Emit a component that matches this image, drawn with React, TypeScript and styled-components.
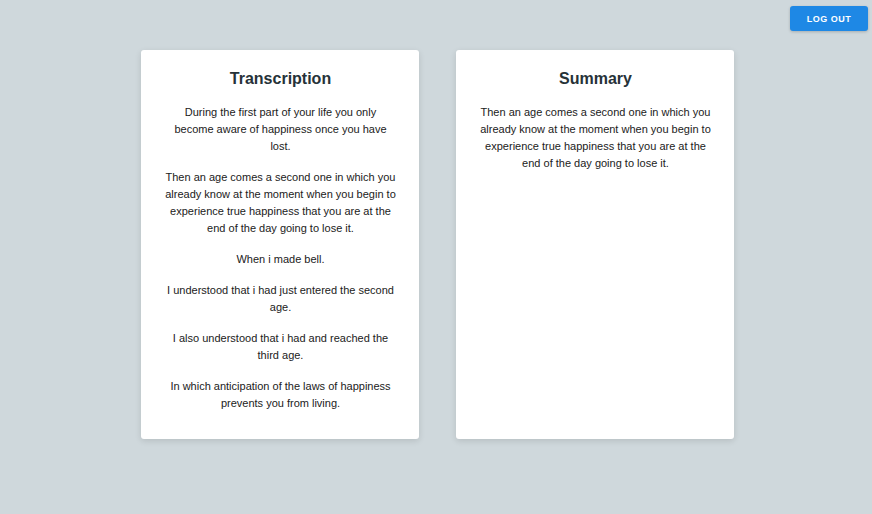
import styled, { createGlobalStyle } from 'styled-components';

const GlobalStyle = createGlobalStyle`
  html, body {
    margin: 0;
    padding: 0;
    background: #cfd8dc;
    font-family: 'Liberation Sans', Arial, sans-serif;
  }
`;

const Page = styled.div`
  min-height: 514px;
  background: #cfd8dc;
`;

const Header = styled.div`
  display: flex;
  justify-content: flex-end;
  padding: 6px 4px 0 0;
`;

const LogoutButton = styled.button`
  width: 78px;
  height: 25px;
  border: none;
  border-radius: 3px;
  background: #1e88e5;
  color: #ffffff;
  font-family: 'Liberation Sans', Arial, sans-serif;
  font-size: 9px;
  font-weight: 700;
  letter-spacing: 0.5px;
  box-shadow: 0 1px 3px rgba(0, 0, 0, 0.2);
  cursor: pointer;
`;

const Columns = styled.div`
  display: flex;
  justify-content: center;
  gap: 37px;
  margin-top: 19px;
  padding-left: 3px;
`;

const Card = styled.div`
  width: 278px;
  box-sizing: border-box;
  background: #ffffff;
  border-radius: 3px;
  padding: 19px 22px 27px 23px;
  box-shadow: 0 2px 6px rgba(0, 0, 0, 0.12);
  text-align: center;
`;

const Title = styled.h2`
  margin: 0 0 15px;
  font-size: 16px;
  line-height: 20px;
  font-weight: 700;
  color: #263238;
`;

const Paragraph = styled.p`
  margin: 0 0 14px;
  font-size: 11px;
  line-height: 17px;
  color: #212121;

  &:last-child {
    margin-bottom: 0;
  }
`;

const transcription = [
  'During the first part of your life you only become aware of happiness once you have lost.',
  'Then an age comes a second one in which you already know at the moment when you begin to experience true happiness that you are at the end of the day going to lose it.',
  'When i made bell.',
  'I understood that i had just entered the second age.',
  'I also understood that i had and reached the third age.',
  'In which anticipation of the laws of happiness prevents you from living.',
];

const summary = [
  'Then an age comes a second one in which you already know at the moment when you begin to experience true happiness that you are at the end of the day going to lose it.',
];

function App() {
  return (
    <Page>
      <GlobalStyle />
      <Header>
        <LogoutButton>LOG OUT</LogoutButton>
      </Header>
      <Columns>
        <Card>
          <Title>Transcription</Title>
          {transcription.map((text) => (
            <Paragraph key={text}>{text}</Paragraph>
          ))}
        </Card>
        <Card>
          <Title>Summary</Title>
          {summary.map((text) => (
            <Paragraph key={text}>{text}</Paragraph>
          ))}
        </Card>
      </Columns>
    </Page>
  );
}

export default App;
